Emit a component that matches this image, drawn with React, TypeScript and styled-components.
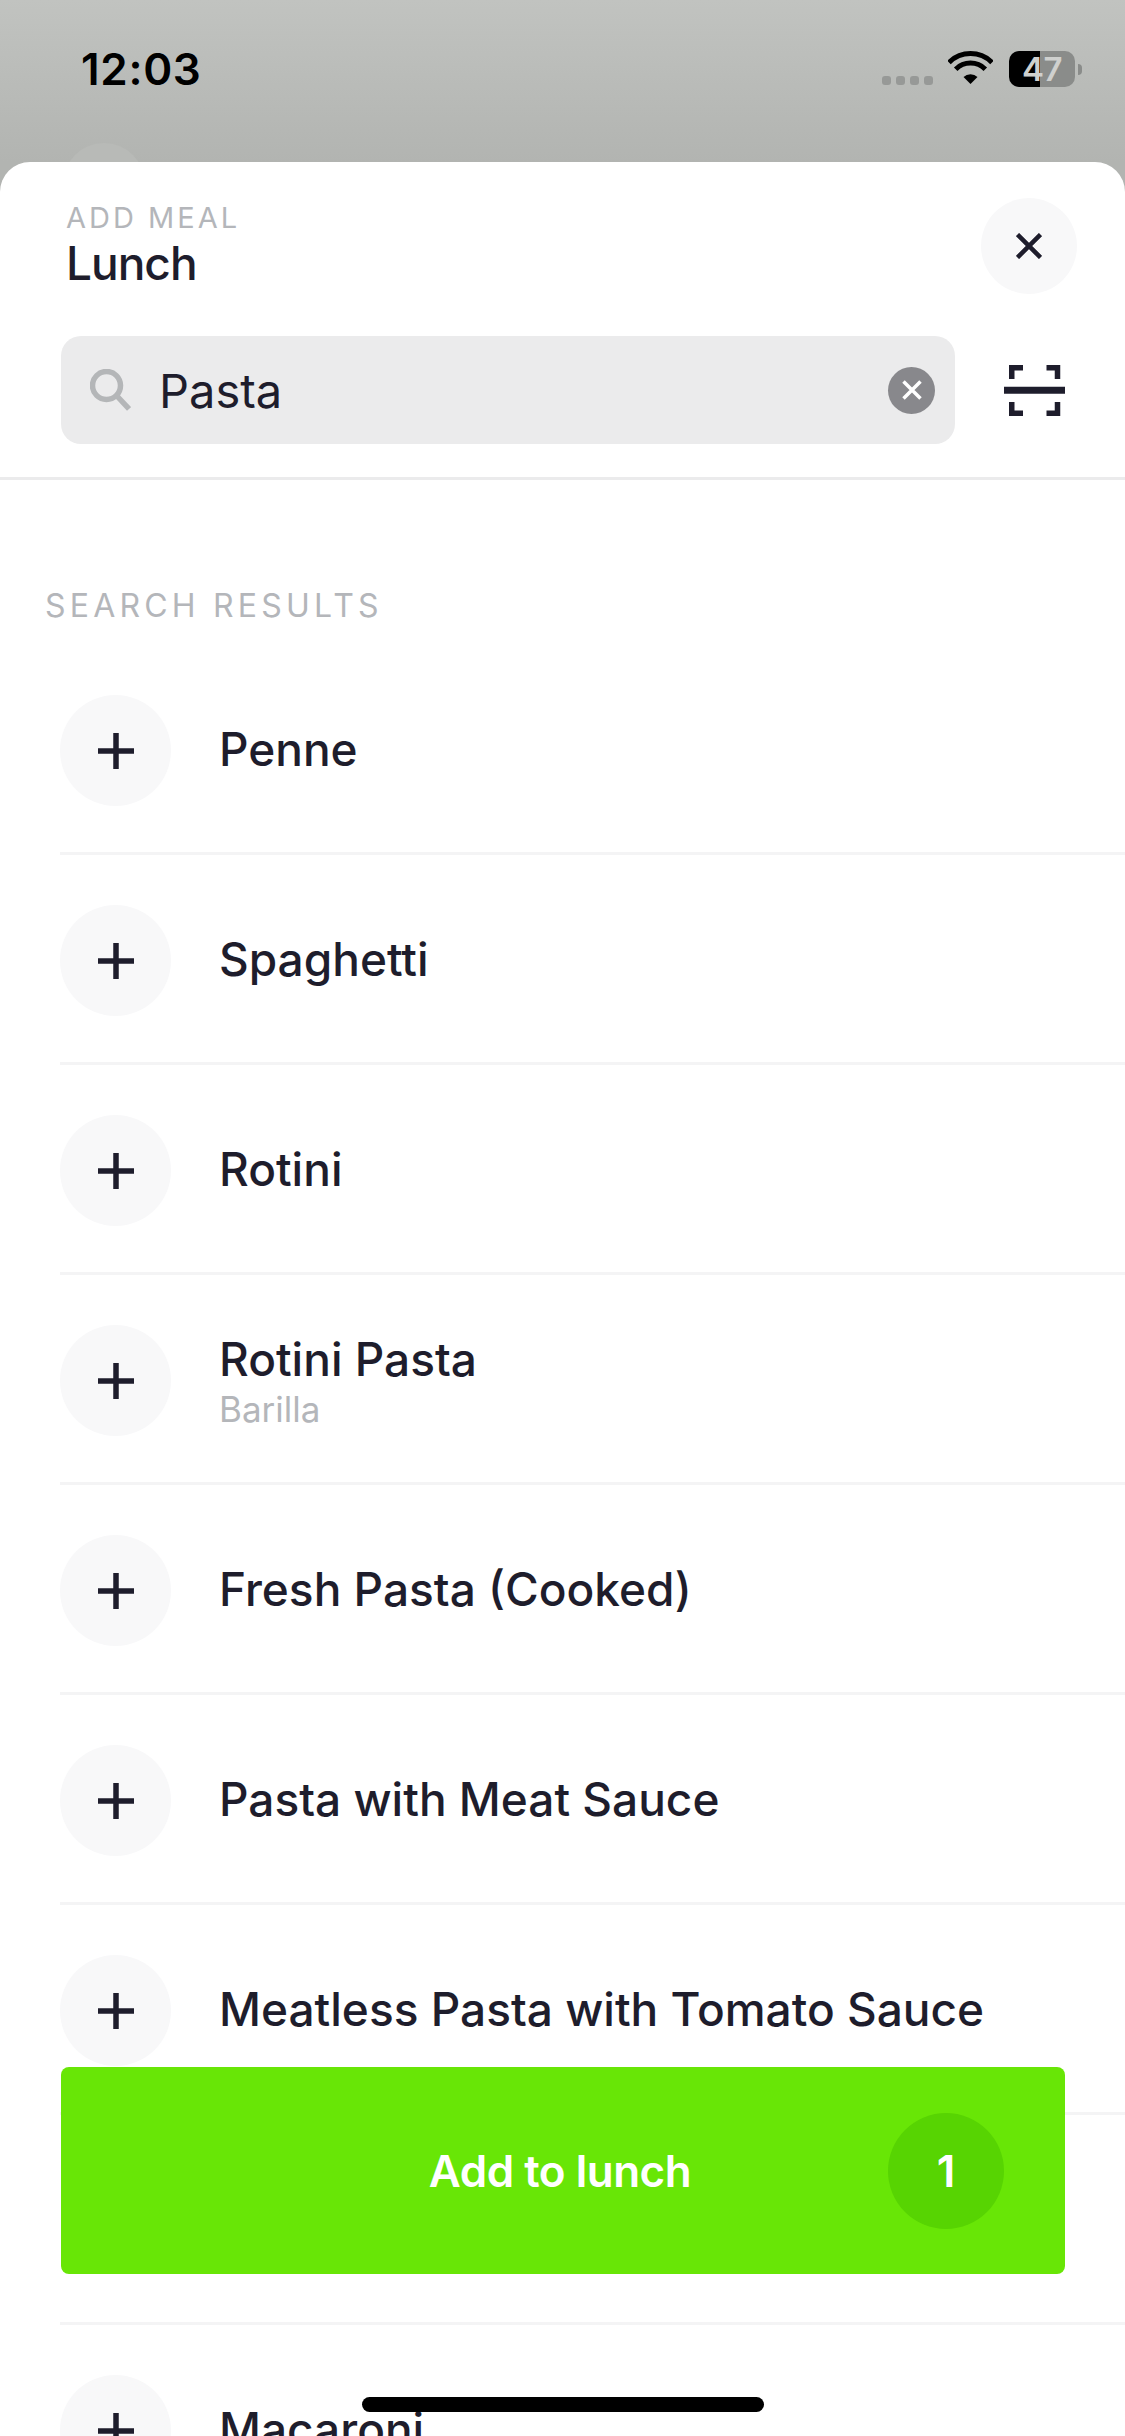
import styled, { createGlobalStyle } from "styled-components";

const GlobalStyle = createGlobalStyle`
  html, body {
    margin: 0;
    padding: 0;
    background: #fff;
  }
  * {
    box-sizing: border-box;
  }
`;

const INK = "#1e1d2c";
const MUTED = "#b4b6ba";
const FONT = `Inter, "Noto Sans", sans-serif`;

const foods = [
  { name: "Penne" },
  { name: "Spaghetti" },
  { name: "Rotini" },
  { name: "Rotini Pasta", brand: "Barilla" },
  { name: "Fresh Pasta (Cooked)" },
  { name: "Pasta with Meat Sauce" },
  { name: "Meatless Pasta with Tomato Sauce" },
  { name: "" },
  { name: "Macaroni" },
];

const App = () => {
  return (
    <>
      <GlobalStyle />
      <Screen>
        <StatusBar>
          <Time>12:03</Time>
          <StatusIcons>
            <SignalDots>
              <i />
              <i />
              <i />
              <i />
            </SignalDots>
            <WifiIcon />
            <Battery>
              <BatteryBody>
                <BatteryLevel>47</BatteryLevel>
              </BatteryBody>
              <BatteryNub />
            </Battery>
          </StatusIcons>
        </StatusBar>

        <Sheet>
          <SheetHeader>
            <Titles>
              <Eyebrow>ADD MEAL</Eyebrow>
              <MealName>Lunch</MealName>
            </Titles>
            <CloseButton>
              <CrossIcon size={26} stroke={INK} width={4.5} />
            </CloseButton>
          </SheetHeader>

          <SearchRow>
            <SearchField>
              <SearchIcon />
              <SearchText>Pasta</SearchText>
              <ClearButton>
                <CrossIcon size={20} stroke="#fff" width={3.5} />
              </ClearButton>
            </SearchField>
            <ScanIcon />
          </SearchRow>

          <Results>
            <SectionLabel>SEARCH RESULTS</SectionLabel>
            {foods.map((food, i) => (
              <FoodRow key={i}>
                {food.name && (
                  <>
                    <AddCircle>
                      <PlusIcon />
                    </AddCircle>
                    <FoodText>
                      <FoodName>{food.name}</FoodName>
                      {food.brand && <FoodBrand>{food.brand}</FoodBrand>}
                    </FoodText>
                  </>
                )}
              </FoodRow>
            ))}
          </Results>
        </Sheet>

        <AddButton>
          <span />
          <AddLabel>Add to lunch</AddLabel>
          <CountBadge>1</CountBadge>
        </AddButton>
        <HomeIndicator />
      </Screen>
    </>
  );
};

export default App;

const WifiIcon = () => (
  <svg width="45" height="33" viewBox="0 0 45 33" fill="none">
    <path d="M1 11.4 A30.5 30.5 0 0 1 44 11.4" stroke="#000" strokeWidth="5" />
    <path d="M7.7 18.2 A21 21 0 0 1 37.3 18.2" stroke="#000" strokeWidth="5" />
    <path d="M22.5 33 L15.5 26 A10 10 0 0 1 29.5 26 Z" fill="#000" />
  </svg>
);

const CrossIcon = ({ size, stroke, width }: { size: number; stroke: string; width: number }) => (
  <svg width={size} height={size} viewBox={`0 0 ${size} ${size}`} fill="none">
    <path d={`M1.5 1.5 L${size - 1.5} ${size - 1.5} M${size - 1.5} 1.5 L1.5 ${size - 1.5}`} stroke={stroke} strokeWidth={width} />
  </svg>
);

const SearchIcon = () => (
  <svg width="41" height="42" viewBox="0 0 41 42" fill="none">
    <circle cx="16.5" cy="16.5" r="14" stroke="#b4b6b8" strokeWidth="5.5" />
    <path d="M26 26 L39 40" stroke="#b4b6b8" strokeWidth="5.5" />
  </svg>
);

const ScanIcon = () => (
  <svg width="61" height="51" viewBox="0 0 61 51" fill="none">
    <path d="M7.75 14 V2.75 H19 M42.5 2.75 H53.5 V14 M7.75 37 V48.25 H19 M42.5 48.25 H53.5 V37" stroke={INK} strokeWidth="5.5" />
    <path d="M0 25.25 H61" stroke={INK} strokeWidth="7" />
  </svg>
);

const PlusIcon = () => (
  <svg width="36" height="36" viewBox="0 0 36 36" fill="none">
    <path d="M18 0 V36 M0 18 H36" stroke={INK} strokeWidth="5.5" />
  </svg>
);

const Screen = styled.div`
  position: relative;
  width: 1125px;
  height: 2436px;
  overflow: hidden;
  display: flex;
  flex-direction: column;
  background: linear-gradient(180deg, #c1c3c0 0, #b2b4b1 162px);
  font-family: ${FONT};
`;

const StatusBar = styled.div`
  position: relative;
  flex: none;
  height: 162px;
  padding: 51px 43px 0 81px;
  display: flex;
  justify-content: space-between;
  align-items: flex-start;

  &::after {
    content: "";
    position: absolute;
    left: 63px;
    top: 143px;
    width: 82px;
    height: 82px;
    border-radius: 50%;
    background: #b8bab7;
  }
`;

const Time = styled.div`
  font-size: 44px;
  line-height: 36px;
  font-weight: 600;
  letter-spacing: 0.7px;
  color: #000;
`;

const StatusIcons = styled.div`
  display: flex;
  align-items: flex-start;
`;

const SignalDots = styled.div`
  display: flex;
  gap: 5px;
  margin-top: 25px;
  margin-right: 15px;

  i {
    width: 9px;
    height: 9px;
    border-radius: 3px;
    background: #979997;
  }
`;

const Battery = styled.div`
  display: flex;
  align-items: center;
  margin-left: 16px;
`;

const BatteryBody = styled.div`
  width: 66px;
  height: 36px;
  border-radius: 10px;
  background: linear-gradient(90deg, #000 31px, #8a8c8a 31px);
  display: flex;
  align-items: center;
  justify-content: center;
`;

const BatteryLevel = styled.span`
  font-size: 33px;
  line-height: 36px;
  font-weight: 600;
  letter-spacing: -0.5px;
  color: #cfd0ce;
`;

const BatteryNub = styled.div`
  width: 4px;
  height: 11px;
  margin-left: 3px;
  border-radius: 0 4px 4px 0;
  background: #8a8c8a;
`;

const Sheet = styled.div`
  position: relative;
  z-index: 1;
  flex: 1;
  min-height: 0;
  background: #fff;
  border-radius: 30px 30px 0 0;
  overflow: hidden;
`;

const SheetHeader = styled.div`
  display: flex;
  justify-content: space-between;
  align-items: flex-start;
  padding: 36px 48px 0 66px;
`;

const Titles = styled.div`
  display: flex;
  flex-direction: column;
  padding-top: 2px;
`;

const Eyebrow = styled.div`
  font-size: 29px;
  line-height: 36px;
  letter-spacing: 3px;
  color: ${MUTED};
`;

const MealName = styled.div`
  font-size: 46px;
  line-height: 54px;
  font-weight: 500;
  letter-spacing: -1px;
  color: ${INK};
`;

const CloseButton = styled.div`
  width: 96px;
  height: 96px;
  border-radius: 50%;
  background: #f8f8f9;
  display: flex;
  align-items: center;
  justify-content: center;
`;

const SearchRow = styled.div`
  display: flex;
  align-items: center;
  gap: 49px;
  margin-top: 42px;
  padding: 0 60px 33px 61px;
  border-bottom: 3px solid #ebebec;
`;

const SearchField = styled.div`
  flex: 1;
  height: 108px;
  border-radius: 20px;
  background: #ebebec;
  display: flex;
  align-items: center;
  padding: 0 20px 0 29px;
`;

const SearchText = styled.div`
  flex: 1;
  margin-left: 28px;
  font-size: 47px;
  color: ${INK};
`;

const ClearButton = styled.div`
  width: 47px;
  height: 47px;
  border-radius: 50%;
  background: #88888c;
  display: flex;
  align-items: center;
  justify-content: center;
`;

const Results = styled.div`
  padding-top: 107px;
`;

const SectionLabel = styled.div`
  padding-left: 45px;
  margin-bottom: 20px;
  font-size: 32px;
  line-height: 38px;
  letter-spacing: 4.2px;
  color: ${MUTED};
`;

const FoodRow = styled.div`
  height: 210px;
  margin-left: 60px;
  padding: 50px 0 46px;
  border-bottom: 3px solid #f4f4f5;
  display: flex;
  align-items: center;
  gap: 48px;
`;

const AddCircle = styled.div`
  flex: none;
  width: 111px;
  height: 111px;
  border-radius: 50%;
  background: #f8f8f9;
  display: flex;
  align-items: center;
  justify-content: center;
`;

const FoodText = styled.div`
  display: flex;
  flex-direction: column;
  padding-bottom: 3px;
`;

const FoodName = styled.div`
  font-size: 46px;
  line-height: 50px;
  font-weight: 500;
  color: ${INK};
`;

const FoodBrand = styled.div`
  margin-top: 10px;
  font-size: 35px;
  line-height: 30px;
  color: ${MUTED};
`;

const AddButton = styled.div`
  position: absolute;
  z-index: 2;
  left: 61px;
  bottom: 162px;
  width: 1004px;
  height: 207px;
  padding: 0 61px;
  border-radius: 8px;
  background: #68e606;
  display: grid;
  grid-template-columns: 1fr auto 1fr;
  align-items: center;
`;

const AddLabel = styled.div`
  padding-right: 6px;
  font-size: 44px;
  font-weight: 600;
  letter-spacing: -0.5px;
  color: #fff;
`;

const CountBadge = styled.div`
  justify-self: end;
  width: 116px;
  height: 116px;
  border-radius: 50%;
  background: #57d402;
  display: flex;
  align-items: center;
  justify-content: center;
  font-size: 44px;
  font-weight: 600;
  color: #fff;
`;

const HomeIndicator = styled.div`
  position: absolute;
  z-index: 3;
  left: 362px;
  bottom: 24px;
  width: 402px;
  height: 15px;
  border-radius: 8px;
  background: #000;
`;
